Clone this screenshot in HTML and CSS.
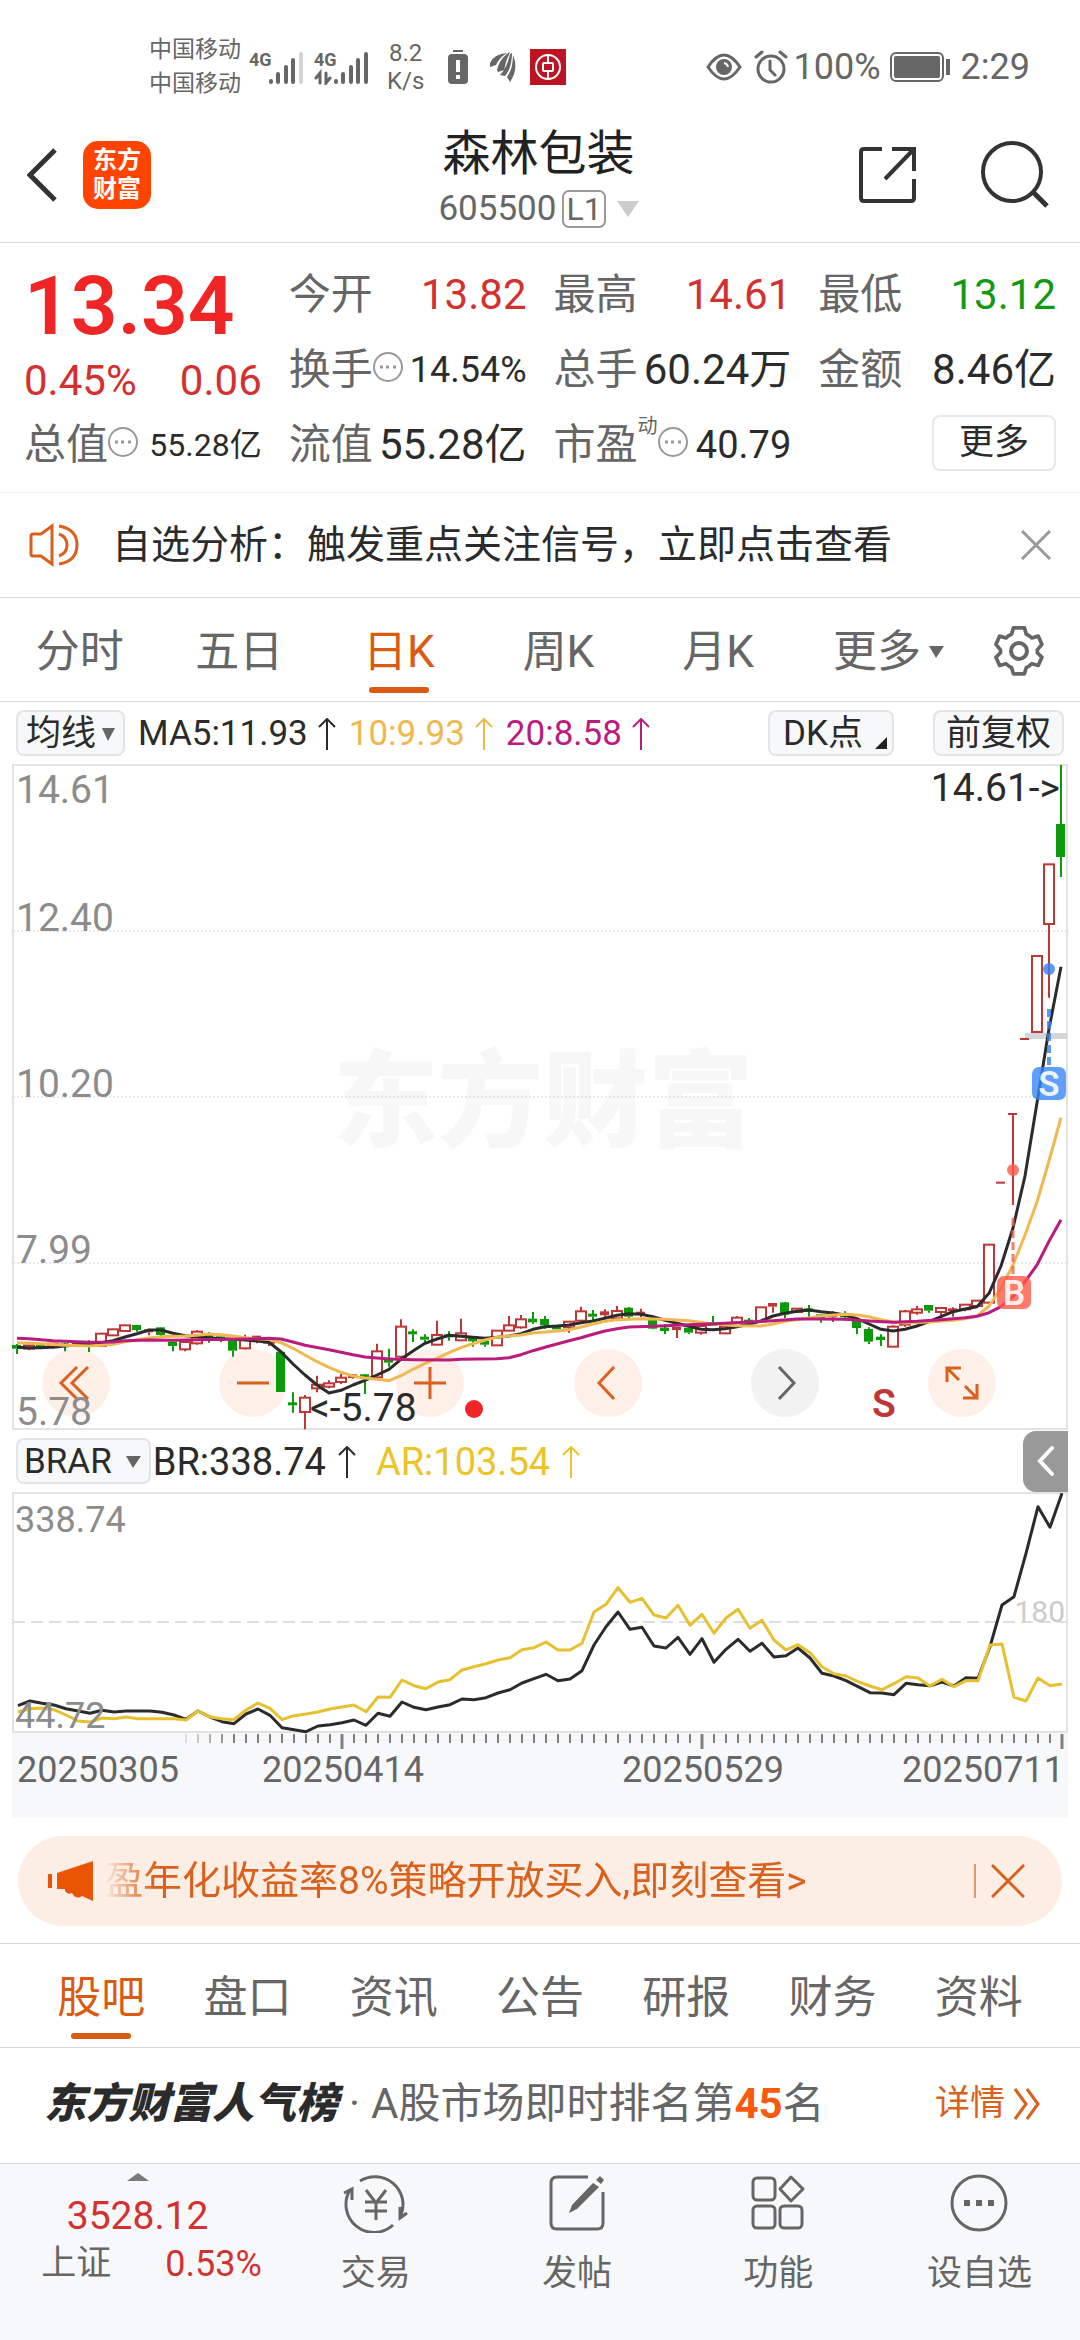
FILE: index.html
```html
<!DOCTYPE html>
<html lang="zh-CN">
<head>
<meta charset="utf-8">
<meta name="viewport" content="width=device-width">
<title>森林包装 605500</title>
<link rel="stylesheet" href="styles.css">
</head>
<body>
<svg class="defs" aria-hidden="true">
  <symbol id="info" viewBox="0 0 30 30"><circle cx="15" cy="15" r="14" fill="none" stroke="#999" stroke-width="2"/><path d="M7 15h3M13 15h3M20 15h3" stroke="#999" stroke-width="3"/></symbol>
  <symbol id="arrow" viewBox="0 0 18 32"><path d="M9 1V32M1 9L9 1L17 9" fill="none" stroke="currentColor" stroke-width="2"/></symbol>
</svg>
<div class="status">
  <div class="status-left">
    <div class="carriers"><span>中国移动</span><span>中国移动</span></div>
    <svg class="signals" width="120" height="36" viewBox="0 0 120 36">
      <g fill="none" stroke="#666" stroke-width="4" stroke-linecap="round">
        <path d="M22 32v1M29 25v8M37 18v15M44 11v22M87 32v1M94 25v8M102 18v15M109 11v22M117 5v28"/>
        <path d="M52 5v28" stroke="#d4d4d4"/>
        <path d="M71 34V24l-4 5M77 24v10l4-5" stroke-width="3"/>
      </g>
      <g class="net-type"><text x="0" y="17">4G</text><text x="65" y="17">4G</text></g>
    </svg>
    <div class="speed"><span>8.2</span><span>K/s</span></div>
    <svg width="20" height="36" viewBox="0 0 20 36"><path d="M5 1h10v2H5z" fill="#666"/><rect y="5" width="20" height="30" rx="4" fill="#666"/><path d="M10 11v12M10 26v4" stroke="#fff" stroke-width="4"/></svg>
    <svg width="26" height="30" viewBox="0 0 26 30"><path d="M0 15V11Q4 2 17 1Q9 6 6 13zM8 20L7 18Q9 8 18 1L20 0Q16 8 14 18zM10 23Q17 16 20 2L22 1Q22 16 15 24zM17 25Q23 17 23 3Q29 17 20 30z" fill="#666"/></svg>
    <svg width="36" height="36" viewBox="0 0 36 36"><rect width="36" height="36" fill="#bd1424"/><g fill="none" stroke="#fff" stroke-width="2"><circle cx="18" cy="18" r="12"/><rect x="13" y="14" width="10" height="8" rx="1"/><path d="M18 6v8M18 22v8"/></g></svg>
  </div>
  <div class="status-right">
    <svg width="36" height="28" viewBox="0 0 36 28"><path d="M2 14Q18-10 34 14Q18 38 2 14z" fill="none" stroke="#666" stroke-width="3"/><circle cx="18" cy="14" r="8" fill="#666"/><path d="M18 10a5 5 0 0 1 4 4" stroke="#fff" stroke-width="2" fill="none"/></svg>
    <svg width="34" height="34" viewBox="0 0 34 34"><g fill="none" stroke="#666" stroke-width="3" stroke-linecap="round"><circle cx="17" cy="19" r="13"/><path d="M2 7l6-5M32 7l-6-5M16 11v9l5 5"/></g></svg>
    <span>100%</span>
    <svg width="61" height="30" viewBox="0 0 61 30"><rect x="1" y="1" width="52" height="28" rx="5" fill="none" stroke="#666" stroke-width="2"/><rect x="4" y="4" width="46" height="22" rx="2" fill="#666"/><path d="M58 7v16" stroke="#666" stroke-width="4"/></svg>
    <span>2:29</span>
  </div>
</div>

<header class="header">
  <div class="header-side">
    <button class="plain" aria-label="返回"><svg width="32" height="56" viewBox="0 0 32 56"><path d="M28 3L3 28L28 53" fill="none" stroke="#333" stroke-width="5"/></svg></button>
    <div class="logo"><span>东方</span><span>财富</span></div>
  </div>
  <div class="title">
    <h1>森林包装</h1>
    <div class="code"><span>605500</span><span class="level">L1</span><svg width="22" height="16" viewBox="0 0 22 16"><path d="M0 0h22L11 16z" fill="#ccc"/></svg></div>
  </div>
  <div class="header-side header-end">
    <button class="plain" aria-label="分享"><svg width="60" height="60" viewBox="0 0 60 60"><path d="M24 4H6Q3 4 3 7V53Q3 56 6 56H53Q56 56 56 53V34M34 4H56V26M56 4L27 34" fill="none" stroke="#333" stroke-width="4"/></svg></button>
    <button class="plain" aria-label="搜索"><svg width="70" height="70" viewBox="0 0 70 70"><circle cx="32" cy="32" r="29" fill="none" stroke="#333" stroke-width="4"/><path d="M53 52l14 14" stroke="#333" stroke-width="5"/></svg></button>
  </div>
</header>

<section class="quote">
  <div class="quote-col lead">
    <div class="cell price">13.34</div>
    <div class="cell up"><span>0.45%</span><span>0.06</span></div>
    <div class="cell"><span class="label">总值<svg class="info" viewBox="0 0 30 30"><use href="#info"/></svg></span><span class="s32">55.28亿</span></div>
  </div>
  <div class="quote-col">
    <div class="cell"><span class="label">今开</span><span class="up">13.82</span></div>
    <div class="cell"><span class="label">换手<svg class="info" viewBox="0 0 30 30"><use href="#info"/></svg></span><span class="s36">14.54%</span></div>
    <div class="cell"><span class="label">流值</span><span>55.28亿</span></div>
  </div>
  <div class="quote-col">
    <div class="cell"><span class="label">最高</span><span class="up">14.61</span></div>
    <div class="cell"><span class="label">总手</span><span>60.24万</span></div>
    <div class="cell"><span class="label">市盈<small>动</small><svg class="info" viewBox="0 0 30 30"><use href="#info"/></svg></span><span class="s38">40.79</span></div>
  </div>
  <div class="quote-col">
    <div class="cell"><span class="label">最低</span><span class="down">13.12</span></div>
    <div class="cell"><span class="label">金额</span><span>8.46亿</span></div>
    <div class="cell end"><button class="more">更多</button></div>
  </div>
</section>

<section class="notice">
  <svg width="52" height="44" viewBox="0 0 52 44"><g fill="none" stroke="#d9611c" stroke-width="3"><path d="M2 13Q2 11 4 11H12L23 3V41L12 33H4Q2 33 2 31z"/><path d="M30 11Q38 14 38 22Q38 30 30 33M30 3Q48 6 48 22Q48 38 30 41"/></g></svg>
  <a href="#">自选分析：触发重点关注信号，立即点击查看</a>
  <button class="plain" aria-label="关闭"><svg width="30" height="30" viewBox="0 0 30 30"><path d="M1 1l28 28M29 1L1 29" stroke="#999" stroke-width="3"/></svg></button>
</section>

<nav class="tabs period">
  <button>分时</button><button>五日</button><button class="active">日K</button><button>周K</button><button>月K</button>
  <button class="expand">更多<svg width="15" height="12" viewBox="0 0 15 12"><path d="M0 0h15L7 12z" fill="#666"/></svg></button>
  <button class="gear" aria-label="设置"><svg width="52" height="54" viewBox="0 0 52 54"><g fill="none" stroke="#666" stroke-width="4"><path d="M20 2H32L34 9Q37 10 40 13L47 11L51 20L46 26V29L51 34L47 43L40 41Q37 44 34 45L32 52H20L18 45Q15 44 12 41L5 43L1 34L6 29V26L1 20L5 11L12 13Q15 10 18 9z" stroke-linejoin="round" transform="translate(2 2) scale(.92)"/><circle cx="26" cy="27" r="8"/></g></svg></button>
</nav>

<section class="chart">
  <div class="bar">
    <button class="chip">均线<svg width="13" height="13" viewBox="0 0 13 13"><path d="M0 0h13L6 13z" fill="#666"/></svg></button>
    <span class="ma">MA5:11.93<svg class="arrow" viewBox="0 0 18 32"><use href="#arrow"/></svg></span>
    <span class="ma ma10">10:9.93<svg class="arrow" viewBox="0 0 18 32"><use href="#arrow"/></svg></span>
    <span class="ma ma20">20:8.58<svg class="arrow" viewBox="0 0 18 32"><use href="#arrow"/></svg></span>
    <button class="chip dk">DK点<svg width="12" height="12" viewBox="0 0 12 12"><path d="M12 0v12H0z" fill="#222"/></svg></button>
    <button class="chip adjust">前复权</button>
  </div>
  <div class="plot">
    <div class="controls">
      <button aria-label="最左"><svg viewBox="0 0 68 68"><path d="M35 18L19 34L35 50M46 18L30 34L46 50"/></svg></button>
      <button aria-label="缩小"><svg viewBox="0 0 68 68"><path d="M18 34H50"/></svg></button>
      <button aria-label="放大"><svg viewBox="0 0 68 68"><path d="M18 34H50M34 18V50"/></svg></button>
      <button aria-label="左移"><svg viewBox="0 0 68 68"><path d="M40 18L25 34L40 50"/></svg></button>
      <button aria-label="右移" class="off"><svg viewBox="0 0 68 68"><path d="M28 18L43 34L28 50"/></svg></button>
      <button aria-label="全屏"><svg viewBox="0 0 68 68"><path d="M19 33V19H33M19 19L31 31M49 35V49H35M49 49L37 37"/></svg></button>
    </div>
    <svg id="kline" viewBox="12 764 1056 666" role="img" aria-label="日K线图">
      <text class="watermark" x="333" y="1138">东方财富</text>
      <path d="M13 931H1067M13 1097H1067M13 1263H1067" stroke="#d2d2d2" stroke-dasharray="2 2"/>
      <rect x="13" y="765" width="1054" height="664" fill="none" stroke="#e3e3e3" stroke-width="2"/>
      <g class="scale"><text x="16" y="803">14.61</text><text x="16" y="931">12.40</text><text x="16" y="1097">10.20</text><text x="16" y="1263">7.99</text><text x="16" y="1425">5.78</text></g>
      <path d="M1025 1036H1067" stroke="#d3d7dc" stroke-width="6"/>
      <g id="candles"></g>
      <g id="averages" fill="none" stroke-width="3" stroke-linejoin="round"></g>
      <g class="marks"><text x="310" y="1421">&lt;-5.78</text><text x="1060" y="801" text-anchor="end">14.61-&gt;</text></g>
      <circle cx="474" cy="1409" r="9" fill="#f02525"/>
      <text class="sell" x="884" y="1417">S</text>
      <g opacity=".8">
        <circle cx="1049" cy="969" r="6" fill="#377ff5"/><path d="M1049 1009V1066" stroke="#377ff5" stroke-width="4" stroke-dasharray="8 4"/><rect x="1032" y="1067" width="34" height="33" rx="7" fill="#3888f8"/>
        <circle cx="1013" cy="1170" r="6" fill="#ff5a46"/><path d="M1013 1218V1275" stroke="#f0604c" stroke-width="3" stroke-dasharray="8 4"/><rect x="997" y="1276" width="34" height="33" rx="7" fill="#ff5a46"/>
      </g>
      <g class="flag"><text x="1049" y="1096">S</text><text x="1014" y="1305">B</text></g>
    </svg>
  </div>
  <div class="bar brar">
    <button class="chip">BRAR<svg width="15" height="12" viewBox="0 0 15 12"><path d="M0 0h15L7 12z" fill="#666"/></svg></button>
    <span class="ma">BR:338.74<svg class="arrow" viewBox="0 0 18 32"><use href="#arrow"/></svg></span>
    <span class="ma ar">AR:103.54<svg class="arrow" viewBox="0 0 18 32"><use href="#arrow"/></svg></span>
    <button class="drawer" aria-label="展开"><svg width="18" height="30" viewBox="0 0 18 30"><path d="M15 2L3 15L15 28" fill="none" stroke="#fff" stroke-width="4" stroke-linecap="round"/></svg></button>
  </div>
  <div class="plot">
    <svg id="brar" viewBox="12 1492 1056 326" role="img" aria-label="BRAR指标">
      <rect x="12" y="1733" width="1056" height="85" fill="#f7f8fa"/>
      <rect x="13" y="1493" width="1054" height="239" fill="#fff" stroke="#c8c8c8"/>
      <path d="M13 1622H1067" stroke="#dedede" stroke-width="2" stroke-dasharray="12 6"/>
      <text class="level-180" x="1065" y="1622">180</text>
      <g id="brar-lines" fill="none" stroke-width="3" stroke-linejoin="round"></g>
      <g class="range"><text x="15" y="1532">338.74</text><text x="15" y="1728">44.72</text></g>
      <g id="ticks" stroke="#808080"></g>
      <g class="dates"><text x="17" y="1782">20250305</text><text x="262" y="1782">20250414</text><text x="622" y="1782">20250529</text><text x="902" y="1782">20250711</text></g>
    </svg>
  </div>
</section>

<aside class="promo">
  <svg width="46" height="40" viewBox="0 0 46 40"><path d="M0 13h4v14H0zM9 12L45 0V40L34 35Q30 38 26 35L24 32Q20 34 17 30V28H9z" fill="#ea5504"/></svg>
  <a href="#">盈年化收益率8%策略开放买入,即刻查看&gt;</a>
  <button class="plain" aria-label="关闭"><svg width="34" height="34" viewBox="0 0 34 34"><path d="M1 1l32 32M33 1L1 33" stroke="#d9611c" stroke-width="3"/></svg></button>
</aside>

<nav class="tabs topics">
  <button class="active">股吧</button><button>盘口</button><button>资讯</button><button>公告</button><button>研报</button><button>财务</button><button>资料</button>
</nav>

<section class="rank">
  <strong class="rank-name">东方财富人气榜</strong>
  <span class="rank-text"><span class="dot">·</span>A股市场即时排名第<b>45</b>名</span>
  <a href="#">详情<svg width="28" height="32" viewBox="0 0 28 32"><path d="M2 1L13 16L2 31M14 1L25 16L14 31" fill="none" stroke="#d9611c" stroke-width="3"/></svg></a>
</section>

<footer class="footer">
  <a class="index" href="#">
    <svg width="22" height="8" viewBox="0 0 22 8"><path d="M0 8L11 0L22 8z" fill="#78787e"/></svg>
    <span class="index-value">3528.12</span>
    <span class="index-row"><span>上证</span><span class="up">0.53%</span></span>
  </a>
  <a href="#"><svg class="foot-icon" viewBox="0 0 66 60"><path d="M17 8A28 28 0 0 1 58 42M50 52A28 28 0 0 1 7 17M1 20L9 16V27M57 34V45L64 40M23 17L33 30L43 17M22 29H44M22 38H44M33 29V47"/></svg>交易</a>
  <a href="#"><svg class="foot-icon" viewBox="0 0 66 60"><path d="M44 4H13Q7 4 7 10V50Q7 56 13 56H53Q59 56 59 50V19"/><path d="M49 10L55 14L33 36L25 40L28 32zM52 7L56 3L60 7L57 11z" fill="#666" stroke="none"/></svg>发帖</a>
  <a href="#"><svg class="foot-icon" viewBox="0 0 66 60"><rect x="8" y="5" width="22" height="22" rx="4"/><rect x="8" y="33" width="22" height="22" rx="4"/><rect x="35" y="33" width="22" height="22" rx="4"/><path d="M46 4L58 16L46 28L35 16z" stroke-linejoin="round"/></svg>功能</a>
  <a href="#"><svg class="foot-icon" viewBox="0 0 66 60"><circle cx="33" cy="30" r="27"/><path d="M18 30h6M30 30h6M42 30h6" stroke-width="6"/></svg>设自选</a>
</footer>
<script src="chart.js"></script>
</body>
</html>
```
FILE: styles.css
```css
* { box-sizing: border-box; }
body {
  margin: 0;
  min-height: 100vh;
  display: flex;
  flex-direction: column;
  background: #fff;
  color: #2b2b2b;
  font-family: Roboto, "Noto Sans CJK SC", sans-serif;
}
button { font: inherit; color: inherit; border: 0; background: none; padding: 0; margin: 0; }
a { color: inherit; text-decoration: none; }
svg { display: block; flex: none; }
.defs { position: absolute; width: 0; height: 0; }
.plain { display: block; }
.up { color: #d33030; }
.down { color: #119a11; }

.status {
  display: flex;
  justify-content: space-between;
  align-items: center;
  height: 108px;
  padding: 26px 50px 0 149px;
  color: #666;
  font-size: 36px;
}
.status-left, .status-right { display: flex; align-items: center; }
.carriers, .speed { display: flex; flex-direction: column; }
.carriers { font-size: 23px; line-height: 34px; }
.signals { margin-left: 8px; }
.net-type { font: bold 18px Roboto, sans-serif; fill: #666; }
.speed { margin: 0 24px 0 18px; font-size: 24px; line-height: 28px; text-align: center; }
.status-left > svg + svg { margin-left: 22px; }
.status-left > svg + svg + svg { margin-left: 14px; }
.status-right svg + svg { margin-left: 12px; }
.status-right span { margin: 0 9px 0 6px; }
.status-right span:last-child { margin: 0 0 0 10px; }

.header {
  display: grid;
  grid-template-columns: 1fr auto 1fr;
  align-items: center;
  height: 135px;
  padding: 0 30px 0 27px;
  border-bottom: 1px solid #d8d8d8;
}
.header-side { display: flex; align-items: center; gap: 24px; }
.header-end { justify-content: flex-end; gap: 62px; }
.logo {
  display: flex;
  flex-direction: column;
  justify-content: center;
  align-items: center;
  width: 68px;
  height: 68px;
  border-radius: 15px;
  background: #ff4400;
  color: #fff;
  font-size: 24px;
  font-weight: 700;
  line-height: 29px;
}
.title { display: flex; flex-direction: column; align-items: center; gap: 7px; padding-top: 5px; }
h1 { margin: 0; font-size: 48px; line-height: 56px; font-weight: 400; color: #222; }
.code { display: flex; align-items: center; color: #666; font-size: 35px; line-height: 40px; }
.level {
  margin: 0 11px 0 6px;
  padding: 0 2px;
  border: 2px solid #999;
  border-radius: 7px;
  font-size: 32px;
  line-height: 34px;
}

.quote {
  display: grid;
  grid-template-columns: repeat(4, 1fr);
  gap: 27px;
  padding: 14px 24px 10px;
  border-bottom: 1px solid #ededed;
  font-size: 42px;
  line-height: 48px;
}
.quote-col { display: grid; grid-template-rows: 75px 75px 75px; min-width: 0; }
.lead { grid-template-rows: 98px 52px 75px; }
.cell { display: flex; align-items: center; justify-content: space-between; white-space: nowrap; }
.end { justify-content: flex-end; padding-bottom: 4px; }
.price { color: #f02525; font-size: 82px; font-weight: 600; line-height: 88px; }
.label { display: flex; align-items: center; color: #666; }
.label small { align-self: flex-start; font-size: 20px; line-height: 10px; }
.info { width: 30px; height: 30px; }
.label .info { margin-bottom: 6px; }
.s32 { font-size: 32px; }
.s36 { font-size: 36px; }
.s38 { font-size: 38px; }
.more { width: 124px; height: 56px; border: 2px solid #e8e8e8; border-radius: 8px; font-size: 35px; line-height: 48px; }

.notice {
  display: flex;
  align-items: center;
  gap: 31px;
  height: 105px;
  padding: 0 29px;
  border-bottom: 1px solid #d8d8d8;
  font-size: 39px;
  line-height: 48px;
}
.notice a { flex: 1; }

.tabs { display: grid; height: 104px; border-bottom: 1px solid #d8d8d8; color: #666; font-size: 44px; line-height: 52px; }
.period { grid-template-columns: repeat(6, minmax(0, 160fr)) minmax(0, 123fr); }
.tabs button {
  position: relative;
  display: flex;
  align-items: center;
  justify-content: center;
  gap: 8px;
  padding-top: 5px;
  white-space: nowrap;
}
.tabs .expand { padding-left: 22px; }
.tabs .gear { padding-top: 2px; }
.tabs .active { color: #d95b12; }
.tabs .active::after {
  content: "";
  position: absolute;
  left: 50%;
  bottom: 8px;
  width: 60px;
  margin-left: -30px;
  height: 6px;
  border-radius: 3px;
  background: #d95b12;
}

.bar { display: flex; align-items: center; height: 62px; padding: 0 16px; font-size: 35px; line-height: 42px; }
.chip {
  display: flex;
  align-items: center;
  gap: 6px;
  height: 46px;
  padding: 2px 8px 0;
  border: 2px solid #e2e4e8;
  border-radius: 8px;
  background: #f7f8fa;
  font-size: 35px;
}
.ma { display: flex; align-items: center; gap: 10px; margin-left: 13px; padding-top: 2px; }
.arrow { width: 18px; height: 32px; }
.ma10 { color: #efb84f; }
.ma20 { color: #ba1c7e; }
.dk { gap: 12px; margin: 0 39px 0 auto; padding: 2px 5px 0 13px; }
.dk svg { align-self: flex-end; margin-bottom: 5px; }
.adjust { padding: 2px 11px 0; }
.brar { padding-right: 12px; font-size: 38px; }
.brar .chip { gap: 14px; padding: 2px 8px 0 6px; }
.brar .ma { gap: 12px; margin-left: 2px; }
.brar .ar { margin-left: 20px; color: #ebc428; }
.drawer {
  display: flex;
  align-items: center;
  justify-content: center;
  width: 45px;
  height: 61px;
  margin-left: auto;
  border-radius: 13px 0 0 13px;
  background: #999;
}

.plot { position: relative; margin: 0 12px; }
.plot > svg { position: relative; width: 100%; height: auto; pointer-events: none; }
.watermark { font: 900 105px "Noto Sans CJK SC", sans-serif; fill: #f7f7f7; }
.scale { font-size: 39px; fill: #8c8c8c; }
.marks { font-size: 39px; fill: #2b2b2b; }
.sell { font-size: 39px; font-weight: 600; fill: #bf3636; text-anchor: middle; }
.flag { font-size: 35px; font-weight: 600; fill: #fff; fill-opacity: .9; text-anchor: middle; }
.range { font-size: 36px; fill: #8c8c8c; }
.level-180 { font-size: 30px; fill: #ccc; text-anchor: end; }
.dates { font-size: 36px; fill: #666; }
.controls { position: absolute; left: 30px; right: 72px; bottom: 13px; display: flex; justify-content: space-between; }
.controls button { width: 68px; height: 68px; border-radius: 50%; background: #fef0e8; }
.controls svg { width: 68px; height: 68px; fill: none; stroke: #d9611c; stroke-width: 3; }
.controls .off { background: #f2f2f2; }
.controls .off svg { stroke: #666; }

.promo {
  display: flex;
  align-items: center;
  height: 90px;
  margin: 18px 18px 17px;
  padding: 0 37px 0 30px;
  border-radius: 45px;
  background: #fceee5;
  color: #d9611c;
  font-size: 39px;
  line-height: 48px;
}
.promo a { flex: 1; margin-left: 10px; -webkit-mask-image: linear-gradient(90deg, transparent, #000 50px); mask-image: linear-gradient(90deg, transparent, #000 50px); }
.promo button { padding-left: 15px; border-left: 2px solid #e09a70; }

.topics { grid-template-columns: repeat(7, minmax(0, 1fr)); height: 105px; padding: 0 28px; border-top: 1px solid #d8d8d8; }

.rank { display: flex; align-items: center; height: 115px; padding: 0 39px 4px 44px; color: #666; font-size: 42px; line-height: 50px; white-space: nowrap; }
.rank-name { color: #2b2b2b; font-weight: 900; font-style: italic; }
.dot { margin: 0 11px; }
.rank b { color: #f95a10; }
.rank a { display: flex; align-items: center; gap: 8px; margin-left: auto; color: #d9611c; font-size: 35px; }

.footer { flex: 1; display: flex; border-top: 1px solid #d3d7dc; background: #f7f8fa; color: #666; font-size: 35px; line-height: 42px; }
.footer a { flex: 201; display: flex; flex-direction: column; align-items: center; padding-top: 9px; gap: 20px; }
.footer .index { flex: 275; gap: 0; }
.foot-icon { width: 66px; height: 60px; fill: none; stroke: #666; stroke-width: 3; }
.index-value { margin-top: 8px; color: #d33030; font-size: 39px; line-height: 54px; }
.index-row { display: flex; gap: 54px; padding-left: 28px; line-height: 42px; }
.index-row .up { font-size: 36px; }
```
FILE: chart.js
```js
// Draws the daily candles, moving averages and the BR/AR indicator.
const NS = "http://www.w3.org/2000/svg";
const STEP = 12;
const FIRST = 17;
const RED = "#bf3636";
const GREEN = "#0a9a0a";

function add(parent, name, attrs) {
  const el = document.createElementNS(NS, name);
  for (const key in attrs) el.setAttribute(key, attrs[key]);
  parent.appendChild(el);
}

// Levels are stored in thirds of a chart unit below the base line.
const level = (base, v) => base + v / 3;

// direction (g = fall, r = rise), high, body top, body bottom, low
const candles = `g 282 288 296 312|r 286 286 296 301|g 284 286 293 296|r 281 281 292 296|g 278 283 290 304|r 278 280 288 290|g 271 282 288 306|r 251 251 288 288|r 236 238 256 256|r 226 226 243 243|g 225 228 240 245|r 241 241 247 256|g 233 235 255 262|g 274 278 288 304|r 276 276 298 304|r 241 245 280 284|g 246 258 265 278|g 262 262 272 277|g 272 276 302 320|r 254 268 295 298|r 260 260 268 280|r 268 268 278 288|g 308 308 426 426|g 427 460 466 488|r 435 443 486 538|r 377 404 415 427|r 391 400 410 415|r 371 383 396 402|r 372 376 384 386|g 372 376 386 432|r 281 304 382 382|g 296 326 338 350|r 208 230 320 326|g 238 247 253 276|g 253 263 269 280|r 212 255 284 286|g 244 256 262 272|r 206 250 271 271|g 262 264 274 290|g 268 276 284 290|r 242 242 286 286|r 198 226 242 242|r 195 208 232 236|g 186 209 217 222|g 198 210 226 236|g 226 228 238 238|r 214 215 232 248|r 170 184 212 212|g 180 194 200 213|r 178 187 196 208|r 168 183 205 205|g 172 176 200 204|r 176 188 194 202|g 208 208 236 238|g 222 236 243 252|r 234 234 240 264|g 236 236 248 252|r 226 228 248 254|g 198 222 228 228|r 230 230 250 250|r 198 203 218 218|g 204 212 218 218|r 172 172 215 215|r 162 162 170 188|g 156 160 194 204|r 174 176 186 186|g 165 178 186 200|g 194 196 204 218|r 184 196 202 216|g 184 196 202 212|g 212 214 234 252|g 232 240 275 282|g 253 263 270 288|r 226 230 290 290|r 180 184 224 230|r 168 178 188 194|g 168 168 182 188|r 172 174 186 198|r 172 178 184 200|r 162 164 178 184|r 152 152 168 168|r -16 -16 158 158|r -202 -202 -202 -202|r -408 -408 -408 -135|r -633 -633 -633 -633|r -882 -882 -654 -654|r -1157 -1157 -978 -757|g -1455 -1275 -1179 -1119`;

const candleLayer = document.getElementById("candles");
candles.split("|").forEach((row, i) => {
  const [dir, ...v] = row.split(" ");
  const [high, top, bottom, low] = v.map(n => level(1250, +n));
  const x = FIRST + i * STEP;
  const color = dir === "g" ? GREEN : RED;
  if (top > high) add(candleLayer, "path", { d: `M${x} ${high}V${top}`, stroke: color, "stroke-width": 2 });
  if (low > bottom) add(candleLayer, "path", { d: `M${x} ${bottom}V${low}`, stroke: color, "stroke-width": 2 });
  if (dir === "r" && bottom - top > 3) {
    add(candleLayer, "rect", { x: x - 5, y: top, width: 10, height: bottom - top, fill: "#fff", stroke: color, "stroke-width": 2 });
  } else {
    add(candleLayer, "rect", { x: x - 5, y: top - 1, width: 9, height: Math.max(2, bottom - top + 1), fill: color });
  }
});

// Each series is "index:level" pairs; missing indexes are interpolated by the line.
const ma5 = "0:292 1:293 2:293 3:291 4:288 5:284 6:282 7:278 8:272 9:261 10:251 11:240 12:240 13:250 14:257 15:260 16:263 17:266 18:268 19:270 20:273 21:277 22:305 23:342 24:375 25:405 26:429 27:421 28:405 29:391 30:375 31:358 32:328 33:303 34:280 35:267 36:256 37:259 38:262 39:265 40:262 41:258 42:251 43:238 44:230 45:228 46:225 47:218 48:213 49:205 50:196 51:191 52:193 53:200 54:211 55:220 56:229 57:238 58:239 59:236 60:230 61:223 62:213 63:198 64:190 65:184 66:180 67:185 68:189 69:195 70:206 71:222 72:238 73:243 74:238 75:228 76:215 77:200 78:185 79:177 80:170 81:130 82:48 83:-66 84:-222 85:-442 86:-663 87:-850";
const ma10 = "0:278 2:281 4:286 6:288 7:286 8:283 9:275 10:269 11:264 12:260 13:259 14:258 15:256 16:252 17:254 18:258 19:263 20:266 21:268 22:278 23:295 24:315 25:335 26:352 27:367 28:378 29:384 30:388 31:392 32:377 33:358 34:340 35:325 36:308 37:293 38:281 39:270 40:262 41:258 42:255 43:249 44:246 45:243 46:239 47:231 48:222 49:214 50:209 52:206 54:208 56:212 58:222 60:227 62:228 63:222 64:214 66:204 67:198 69:193 70:195 71:200 72:209 73:216 74:219 76:216 78:211 79:206 80:198 81:168 82:115 83:45 84:-45 85:-144 86:-267 87:-397";
const ma20 = "0:265 1:266 3:272 6:277 8:276 9:272 11:270 13:271 15:269 18:268 20:266 21:265 22:267 23:276 24:286 26:299 28:314 29:321 31:327 33:329 36:330 37:328 40:326 41:323 42:314 43:302 44:292 45:282 46:272 47:263 48:253 49:243 50:236 51:231 53:229 55:226 57:223 59:220 61:216 63:212 65:207 67:207 69:208 71:213 73:217 75:214 77:209 79:203 80:199 81:188 82:170 83:140 84:95 85:45 86:-26 87:-91";

function line(layer, pairs, base, first, color) {
  const points = pairs.map(([i, v]) => `${first + i * STEP},${level(base, v).toFixed(1)}`).join(" ");
  add(layer, "polyline", { points, stroke: color });
}
const parse = text => text.split(" ").map(p => p.split(":").map(Number));
const averages = document.getElementById("averages");
line(averages, parse(ma5), 1250, FIRST, "#2b2b2b");
line(averages, parse(ma10), 1250, FIRST, "#f0b850");
line(averages, parse(ma20), 1250, FIRST, "#ba1c7e");

const br = [857,843,850,855,866,873,880,871,876,873,873,873,877,885,898,873,891,905,911,882,867,886,923,929,935,918,914,908,900,916,880,889,846,862,869,861,854,837,839,833,819,809,789,776,763,782,777,752,675,620,576,628,622,678,684,652,703,656,727,688,658,694,670,711,707,684,714,760,768,782,800,818,819,824,790,794,797,786,798,773,775,680,555,530,400,260,322,220];
const ar = [876,866,864,869,885,903,906,894,896,891,896,896,896,896,900,873,891,896,899,870,849,865,899,887,882,876,867,861,855,875,831,832,780,797,806,786,779,750,740,731,720,713,689,683,666,690,690,670,576,553,503,547,535,585,594,556,616,583,640,594,568,625,601,660,690,674,698,740,761,768,785,798,809,791,770,774,798,778,800,782,782,675,672,832,843,774,797,792];
const lines = document.getElementById("brar-lines");
line(lines, [...br.entries()], 1420, FIRST + 1, "#2b2b2b");
line(lines, [...ar.entries()], 1420, FIRST + 1, "#e6c02f");

// Day ticks fade in from the left; every thirtieth one is a date mark.
const ticks = document.getElementById("ticks");
for (let i = 14; i < 88; i++) {
  const mark = i % 30 === 27;
  add(ticks, "path", {
    d: `M${FIRST + 1 + i * STEP} 1734V${mark ? 1749 : 1743}`,
    "stroke-width": mark ? 3 : 2,
    opacity: Math.min(1, (i - 13) / 5)
  });
}
```
